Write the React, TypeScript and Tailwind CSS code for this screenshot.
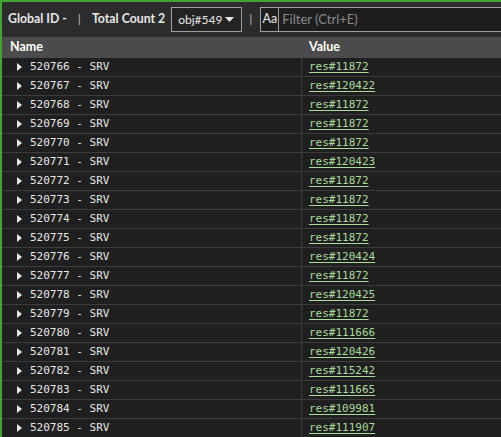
import React from "react";

const rows: [string, string][] = [
  ["520766", "res#11872"],
  ["520767", "res#120422"],
  ["520768", "res#11872"],
  ["520769", "res#11872"],
  ["520770", "res#11872"],
  ["520771", "res#120423"],
  ["520772", "res#11872"],
  ["520773", "res#11872"],
  ["520774", "res#11872"],
  ["520775", "res#11872"],
  ["520776", "res#120424"],
  ["520777", "res#11872"],
  ["520778", "res#120425"],
  ["520779", "res#11872"],
  ["520780", "res#111666"],
  ["520781", "res#120426"],
  ["520782", "res#115242"],
  ["520783", "res#111665"],
  ["520784", "res#109981"],
  ["520785", "res#111907"],
];

const ui = { fontFamily: 'Lato, "Noto Sans", sans-serif' };
const mono = { fontFamily: '"DejaVu Sans Mono", "Liberation Mono", monospace' };

export default function App() {
  return (
    <div className="h-[437px] w-[501px] overflow-hidden border-l-2 border-t-2 border-[#3fa52f] bg-[#1f1f1f] text-[#e8e8e8]">
      {/* toolbar */}
      <div style={ui} className="flex h-[35px] items-center bg-[#2c2c2c] pl-[6px] text-[12.3px] font-bold">
        <span>Global ID -</span>
        <span className="ml-[11px] mr-[11px] font-normal text-[#bbbbbb]">|</span>
        <span>Total Count 2</span>
        <div className="ml-[6px] flex h-[25px] w-[71px] items-center justify-between border border-[#a0a0a0] bg-[#232323] pl-[6px] pr-[7px] text-[12px] font-normal">
          <span>obj#549</span>
          <svg width="9" height="5" viewBox="0 0 9 5">
            <path d="M0 0h9L4.5 5z" fill="#e8e8e8" />
          </svg>
        </div>
        <span className="ml-[7px] mr-[8px] font-normal text-[#bbbbbb]">|</span>
        <div className="flex h-[25px] flex-1 items-center border border-r-0 border-[#a0a0a0] bg-[#1e1e1e]">
          <span className="flex h-full w-[18px] items-center justify-center border-r border-[#a0a0a0] text-[12.5px] font-normal">
            Aa
          </span>
          <span className="pl-[3px] text-[13px] font-normal text-[#8a8a8a]">Filter (Ctrl+E)</span>
        </div>
      </div>
      {/* header */}
      <div style={ui} className="flex h-[21px] items-center bg-[#4b4b4b] text-[12.5px] font-bold text-white">
        <div className="w-[300px] pl-[8px]">Name</div>
        <div className="pl-[7px]">Value</div>
      </div>
      {/* rows */}
      <div style={mono} className="text-[11px]">
        {rows.map(([id, res]) => (
          <div key={id} className="flex h-[19px] items-center border-b border-[#3c3c3c]">
            <div className="flex h-full w-[300px] items-center border-r border-[#3c3c3c] pl-[15px]">
              <svg width="5" height="8" viewBox="0 0 5 8" className="mr-[8px]">
                <path d="M0 0L5 4L0 8z" fill="#e8e8e8" />
              </svg>
              <span>{id} - SRV</span>
            </div>
            <div className="pl-[7px]">
              <span className="cursor-pointer text-[#a9dc9b] underline underline-offset-2">{res}</span>
            </div>
          </div>
        ))}
      </div>
    </div>
  );
}
